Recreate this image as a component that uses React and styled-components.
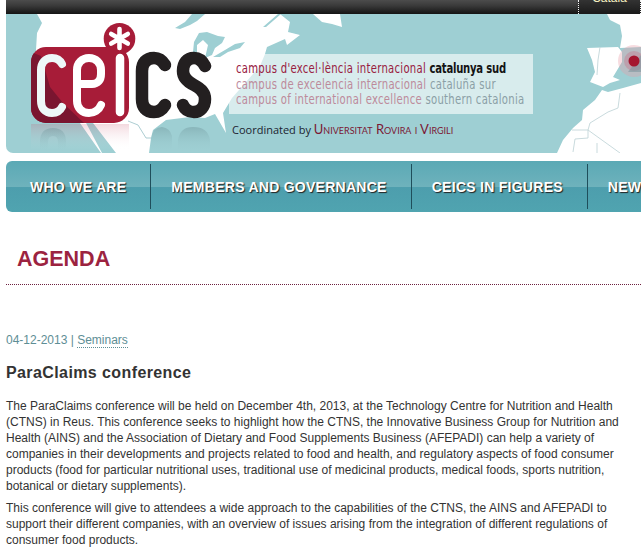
import React from "react";
import styled, { createGlobalStyle } from "styled-components";

const Global = createGlobalStyle`
  html, body { margin: 0; padding: 0; background: #fff; overflow: hidden; }
  body { font-family: "Liberation Sans", Arial, sans-serif; color: #333; }
`;

const Page = styled.div`
  width: 641px;
  height: 555px;
  padding-left: 6px;
  box-sizing: border-box;
  overflow: hidden;
`;

const TopBar = styled.div`
  height: 14px;
  width: 635px;
  display: flex;
  justify-content: flex-end;
  background: linear-gradient(#4c4c4c, #3a3a3a 40%, #141414);
`;

const LangItem = styled.a`
  width: 63px;
  box-sizing: border-box;
  height: 14px;
  border-left: 1px dotted #f4f4f4;
  border-right: 1px dotted #f4f4f4;
  display: flex;
  justify-content: center;
  align-items: flex-end;
  overflow: hidden;
  padding-bottom: 9px;
  color: #f6efc0;
  font-size: 12px;
  line-height: 14px;
  background: linear-gradient(#333, #1a1a1a);
`;

const Banner = styled.div`
  position: relative;
  height: 139px;
  width: 635px;
  background: #9ecfd3;
  border-radius: 0 0 0 7px;
  overflow: hidden;
  display: flex;
`;

const MapArt = styled.svg`
  position: absolute;
  inset: 0;
  width: 635px;
  height: 139px;
`;

const Logo = styled.svg`
  position: relative;
  flex: none;
  width: 223px;
  height: 139px;
`;

const Slogan = styled.div`
  position: relative;
  flex: none;
  padding-top: 40px;
`;

const Panel = styled.div`
  width: 304px;
  height: 60px;
  box-sizing: border-box;
  padding: 7px 0 0 7px;
  background: rgba(255, 255, 255, 0.6);
`;

const SloganLine = styled.div`
  font-family: "DejaVu Sans Condensed", "DejaVu Sans", sans-serif;
  font-size: 14px;
  line-height: 15.5px;
  letter-spacing: 0.35px;
  white-space: nowrap;
  transform: scaleX(0.8);
  transform-origin: left center;
  color: ${(p) => (p.$faded ? "#bd8a9b" : "#98203f")};
`;

const Region = styled.span`
  font-weight: ${(p) => (p.$faded ? 400 : 700)};
  letter-spacing: ${(p) => (p.$faded ? 0.35 : -0.3)}px;
  color: ${(p) => (p.$faded ? "#8b9fa6" : "#141414")};
`;

const Coordinated = styled.div`
  margin: 8px 0 0 3px;
  font-family: "Open Sans", sans-serif;
  font-size: 11px;
  line-height: 14px;
  color: #1c2430;
  white-space: nowrap;
`;

const University = styled.span`
  font-family: "Lato", sans-serif;
  font-size: 13px;
  font-variant: small-caps;
  color: #7b1733;
`;

const Nav = styled.nav`
  margin-top: 8px;
  height: 51px;
  width: 635px;
  display: flex;
  align-items: center;
  overflow: hidden;
  border-radius: 6px 0 0 6px;
  background: linear-gradient(#5ba9b5, #6eb2bc 50%, #4d9ead 52%, #50a4b0);
`;

const NavItem = styled.a`
  flex: none;
  height: 45px;
  display: flex;
  align-items: center;
  padding: 0 24px 0 ${(p) => (p.$first ? 24 : 20)}px;
  border-right: ${(p) => (p.$last ? "none" : "1px solid #1f4e5b")};
  color: #fff;
  font-size: 14px;
  letter-spacing: 0.27px;
  font-weight: 700;
  white-space: nowrap;
  text-shadow: 1px 1px 1px #222;
`;

const PageTitleBar = styled.div`
  margin-top: 33px;
  padding: 0 0 10px 11px;
  border-bottom: 1px dotted #6e2140;
`;

const PageTitle = styled.h1`
  margin: 0;
  font-size: 21.5px;
  line-height: 29px;
  font-weight: 700;
  color: #9c2340;
`;

const Meta = styled.div`
  margin-top: 48px;
  font-size: 12px;
  line-height: 14px;
  color: #5e8e95;
`;

const MetaLink = styled.a`
  border-bottom: 1px dotted #5e8e95;
`;

const ArticleTitle = styled.h2`
  margin: 16px 0 0;
  font-size: 16px;
  letter-spacing: 0.4px;
  line-height: 20px;
  font-weight: 700;
  color: #333;
`;

const Body = styled.p`
  margin: ${(p) => p.$top}px 0 0;
  width: 616px;
  font-size: 12px;
  line-height: 16px;
  color: #333;
`;

const MapDrawing = () => (
  <MapArt viewBox="6 14 635 139">
    <path
      fill="#fff"
      d="M37,14 L42,23 L37,33 L36,50 L41,68 L50,87 L63,103 L80,123 L101,153 L149,153 L151,138 L153,130 L166,120 L190,117 L205,118 L215,114 L226,133 L223,113 L232,98 L246,82 L260,66 L265,54 L267,47 L285,39 L287,45 L300,35 L288,32 L290,22 L280,14 Z M313,14 L340,14 L342,27 L332,24 L322,22 Z"
    />
    <path
      fill="#9ecfd3"
      d="M85,121 L93,123 L116,153 L102,153 Z M175,28 L185,22 L192,14 L205,14 L197,21 L190,25 L180,29 Z M193,52 L194,42 L199,33 L207,32 L218,36 L225,37 L222,43 L215,48 L212,55 L205,58 L208,45 L203,40 L197,45 L197,55 Z M213,57 L225,50 L235,44 L245,42 L240,48 L228,52 L220,57 Z M263,27 L278,14 L281,14 L266,27 Z"
    />
    <path
      fill="#fff"
      d="M607,14 L641,14 L641,47 L620,48 L622,36 L620,25 L610,20 Z M587,48 L618,47 L622,52 L622,62 L613,77 L620,80 L610,83 L603,87 L590,82 L595,72 L592,60 Z M557,153 L563,140 L573,128 L582,120 L583,110 L595,100 L602,90 L608,92 L623,88 L641,83 L641,153 Z"
    />
    <path
      fill="none"
      stroke="#c3d6d9"
      strokeWidth="0.9"
      d="M600,47 L598,60 L597,75 M620,93 L618,108 L608,112 L590,123 L588,130 L572,130 M588,130 L588,138 L575,139 L573,152 M588,130 L620,153 M597,143 L597,153"
    />
    <circle cx="634" cy="61" r="16" fill="#e79aa7" opacity="0.35" />
    <circle cx="634" cy="61" r="10" fill="#c76a80" opacity="0.35" />
    <path fill="#7f98a0" opacity="0.6" d="M628,72 L641,55 L641,72 Z" />
    <circle cx="634" cy="61" r="5.5" fill="#a5162f" />
    <path fill="none" stroke="#8ab8be" strokeWidth="0.7" d="M128,121 L138,125 L146,138 L151,138" />
  </MapArt>
);

const LogoDrawing = () => (
  <Logo viewBox="6 14 223 139">
    <defs>
      <clipPath id="plate">
        <rect x="31" y="47" width="98" height="76" rx="15" />
      </clipPath>
      <linearGradient id="fade" x1="0" y1="0" x2="0" y2="1">
        <stop offset="0" stopColor="#c9506a" stopOpacity="0.22" />
        <stop offset="1" stopColor="#ffffff" stopOpacity="0" />
      </linearGradient>
      <linearGradient id="shade" x1="0" y1="0" x2="0" y2="1">
        <stop offset="0" stopColor="#6a8f95" stopOpacity="0.4" />
        <stop offset="1" stopColor="#9ecfd3" stopOpacity="0" />
      </linearGradient>
    </defs>
    <rect x="31" y="124" width="98" height="26" fill="url(#fade)" />
    <path d="M40,152 V142 Q40,128 53,128 Q66,128 66,142 V152 H58 V142 Q58,136 53,136 Q48,136 48,142 V152 Z" fill="url(#shade)" />
    <path d="M151,152 V138 Q153,127 162,127 Q170,128 172,136 L172,152 Z M178,152 V140 Q180,127 193,127 Q208,127 210,140 V152 Z" fill="url(#shade)" />
    <circle cx="119.5" cy="38.7" r="15.8" fill="#a71c38" />
    <rect x="31" y="47" width="98" height="76" rx="15" fill="#a71c38" />
    <path clipPath="url(#plate)" d="M31,52 L41,56 L50,87 L63,103 L84,123 L31,123 Z" fill="#7a1530" />
    <g fill="none" stroke="#fff" strokeWidth="4.6" strokeLinecap="round">
      <path d="M119.5,29 V48 M111.2,34 L127.8,43.5 M127.8,34 L111.2,43.5" />
    </g>
    <g fill="none" stroke="#fff" strokeWidth="8" strokeLinecap="round" strokeLinejoin="round">
      <path stroke="#eef7f8" d="M62,64 C60,60 56,58 52,58 C45,58 41,63 41,70 V101 C41,108 45,113 52,113 C56,113 60,111 62,107" />
      <path d="M77,84 H92 C98,84 101,80 101,74 V70 C101,63 96,58 89,58 C82,58 77,63 77,70 V101 C77,108 82,113 89,113 C94,113 99,110 101,105" />
      <path strokeWidth="8.5" d="M120,58 V112" />
    </g>
    <g fill="none" stroke="#231f20" strokeWidth="12.5" strokeLinecap="round" strokeLinejoin="round">
      <path d="M165,65 C162,60 158,58 154,58 C146,58 142,63 142,71 V99 C142,107 146,112 154,112 C158,112 162,110 165,105" />
      <path d="M205,66 C202,60 198,58 194,58 C187,58 183,63 183,71 C183,78 188,82 194,85 C200,88 205,92 205,99 C205,107 200,112 194,112 C189,112 185,110 183,105" />
    </g>
  </Logo>
);

const navItems = ["WHO WE ARE", "MEMBERS AND GOVERNANCE", "CEICS IN FIGURES", "NEWS"];

export default function App() {
  return (
    <Page>
      <Global />
      <TopBar>
        <LangItem>Català</LangItem>
      </TopBar>
      <Banner>
        <MapDrawing />
        <LogoDrawing />
        <Slogan>
          <Panel>
            <SloganLine>
              campus d'excel·lència internacional <Region>catalunya sud</Region>
            </SloganLine>
            <SloganLine $faded>
              campus de excelencia internacional <Region $faded>cataluña sur</Region>
            </SloganLine>
            <SloganLine $faded>
              campus of international excellence <Region $faded>southern catalonia</Region>
            </SloganLine>
          </Panel>
          <Coordinated>
            Coordinated by <University>Universitat Rovira i Virgili</University>
          </Coordinated>
        </Slogan>
      </Banner>
      <Nav>
        {navItems.map((item, i) => (
          <NavItem key={item} $first={i === 0} $last={i === navItems.length - 1}>
            {item}
          </NavItem>
        ))}
      </Nav>
      <PageTitleBar>
        <PageTitle>AGENDA</PageTitle>
      </PageTitleBar>
      <Meta>
        04-12-2013 | <MetaLink>Seminars</MetaLink>
      </Meta>
      <ArticleTitle>ParaClaims conference</ArticleTitle>
      <Body $top={15}>
        The ParaClaims conference will be held on December 4th, 2013, at the Technology Centre for Nutrition and Health
        (CTNS) in Reus. This conference seeks to highlight how the CTNS, the Innovative Business Group for Nutrition and
        Health (AINS) and the Association of Dietary and Food Supplements Business (AFEPADI) can help a variety of
        companies in their developments and projects related to food and health, and regulatory aspects of food consumer
        products (food for particular nutritional uses, traditional use of medicinal products, medical foods, sports
        nutrition, botanical or dietary supplements).
      </Body>
      <Body $top={6}>
        This conference will give to attendees a wide approach to the capabilities of the CTNS, the AINS and AFEPADI to
        support their different companies, with an overview of issues arising from the integration of different
        regulations of consumer food products.
      </Body>
    </Page>
  );
}
